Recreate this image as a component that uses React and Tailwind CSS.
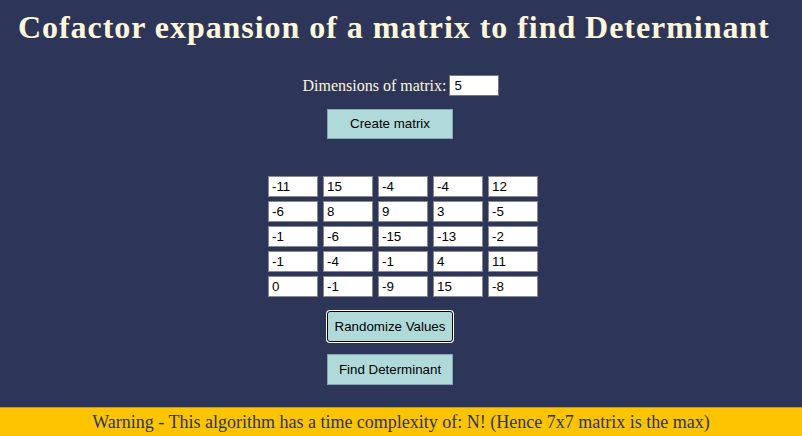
import React from "react";

const matrix = [
  [-11, 15, -4, -4, 12],
  [-6, 8, 9, 3, -5],
  [-1, -6, -15, -13, -2],
  [-1, -4, -1, 4, 11],
  [0, -1, -9, 15, -8],
];

const serif = { fontFamily: '"Liberation Serif", "Times New Roman", serif' };

export default function App() {
  return (
    <div className="min-h-screen flex flex-col bg-[#2d3659]">
      <div className="flex-1 flex flex-col items-center">
        <h1
          className="self-start pl-[18px] pt-[9px] text-[32px] leading-[36px] font-bold text-[#fff8dc] whitespace-nowrap tracking-[0.95px]"
          style={serif}
        >
          Cofactor expansion of a matrix to find Determinant
        </h1>
        <div className="mt-[30px] flex items-center h-[21px]">
          <span className="text-[16px] text-[#fff8dc] mr-[3px]" style={serif}>
            Dimensions of matrix:
          </span>
          <input
            defaultValue="5"
            className="w-[50px] h-[21px] bg-white border border-[#767676] px-[4px] text-[13.33px] text-black outline-none font-['Liberation_Sans',Arial,sans-serif]"
          />
        </div>
        <button className="mt-[13px] mr-[22px] w-[126px] h-[30px] bg-[#b0dada] border border-[#7fa8b0] text-[13.33px] text-black font-['Liberation_Sans',Arial,sans-serif]">
          Create matrix
        </button>
        <div className="mt-[37px] ml-[4px] flex flex-col gap-[4px]">
          {matrix.map((row, i) => (
            <div key={i} className="flex gap-[5px]">
              {row.map((v, j) => (
                <input
                  key={j}
                  defaultValue={v}
                  className="w-[50px] h-[21px] bg-white border border-[#8a8a8a] px-[3px] text-[13.33px] text-black outline-none font-['Liberation_Sans',Arial,sans-serif]"
                />
              ))}
            </div>
          ))}
        </div>
        <button className="mt-[14px] mr-[22px] w-[126px] h-[31px] bg-[#b0dada] border border-black rounded-[3px] shadow-[0_0_0_1px_#ffffff] text-[13.33px] text-black font-['Liberation_Sans',Arial,sans-serif]">
          Randomize Values
        </button>
        <button className="mt-[12px] mr-[22px] w-[126px] h-[31px] bg-[#b0dada] border border-[#7fa8b0] text-[13.33px] text-black font-['Liberation_Sans',Arial,sans-serif]">
          Find Determinant
        </button>
      </div>
      <footer
        className="h-[29px] bg-[#ffc400] border-t border-[#b89a3a] flex items-center justify-center text-[18px] text-[#2d3659]"
        style={serif}
      >
        Warning - This algorithm has a time complexity of: N! (Hence 7x7 matrix is the max)
      </footer>
    </div>
  );
}
